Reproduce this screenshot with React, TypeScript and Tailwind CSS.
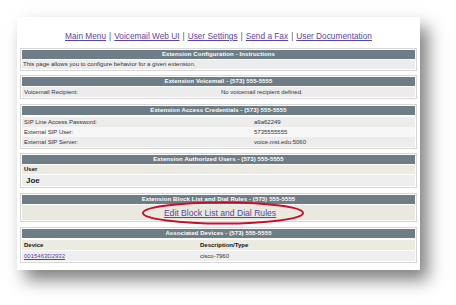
import React from "react";

const Header = ({ children }: { children: React.ReactNode }) => (
  <div className="h-[9px] bg-[#6e7d86] text-white text-[6px] leading-[9px] text-center font-bold tracking-[0.1px]">
    {children}
  </div>
);

const Box = ({ children, className = "" }: { children: React.ReactNode; className?: string }) => (
  <div className={"mx-[3px] border border-[#d6d6d6] p-px flex flex-col gap-px bg-white " + className}>
    {children}
  </div>
);

export default function App() {
  return (
    <div className="w-[456px] h-[305px] bg-white pl-[17px] pt-[17px]" style={{ fontFamily: '"Liberation Sans", Arial, sans-serif' }}>
      <div className="w-[403px] h-[253px] bg-white shadow-[8px_10px_16px_rgba(0,0,0,0.5)] flex flex-col">
        <div className="h-[31px] flex items-end justify-center pb-[6px] text-[8.3px] leading-[11px] text-[#555]">
          <span className="text-[#5b44a6] underline">Main Menu</span>
          <span className="mx-[3px]">|</span>
          <span className="text-[#5b44a6] underline">Voicemail Web UI</span>
          <span className="mx-[3px]">|</span>
          <span className="text-[#5b44a6] underline">User Settings</span>
          <span className="mx-[3px]">|</span>
          <span className="text-[#5b44a6] underline">Send a Fax</span>
          <span className="mx-[3px]">|</span>
          <span className="text-[#5b44a6] underline">User Documentation</span>
        </div>

        <div className="flex flex-col gap-[4px] text-[6px] text-[#333]">
          <Box>
            <Header>Extension Configuration - Instructions</Header>
            <div className="h-[9px] leading-[9px] bg-[#ececec] px-[1px]">
              This page allows you to configure behavior for a given extension.
            </div>
          </Box>

          <Box>
            <Header>Extension Voicemail - (573) 555-5555</Header>
            <div className="h-[10px] leading-[10px] bg-[#ececec] grid grid-cols-[197px_1fr] px-[2px]">
              <span>Voicemail Recipient:</span>
              <span>No voicemail recipient defined.</span>
            </div>
          </Box>

          <Box className="mt-[1px]">
            <Header>Extension Access Credentials - (573) 555-5555</Header>
            <div className="flex flex-col mt-[1px]">
              <div className="h-[10px] leading-[10px] bg-[#ececec] grid grid-cols-[230px_1fr] px-[2px]">
                <span>SIP Line Access Password:</span>
                <span>a9a62249</span>
              </div>
              <div className="h-[10px] leading-[10px] bg-[#f7f7f7] grid grid-cols-[230px_1fr] px-[2px]">
                <span>External SIP User:</span>
                <span>5735555555</span>
              </div>
              <div className="h-[10px] leading-[10px] bg-[#ececec] grid grid-cols-[230px_1fr] px-[2px]">
                <span>External SIP Server:</span>
                <span>voice.mst.edu:5060</span>
              </div>
            </div>
          </Box>

          <Box>
            <Header>Extension Authorized Users - (573) 555-5555</Header>
            <div className="h-[9px] leading-[9px] bg-[#ebebe1] px-[2px] font-bold text-[#111]">User</div>
            <div className="h-[11px] leading-[11px] bg-[#eeeeee] px-[4px] font-bold text-[8px] text-[#222]">Joe</div>
          </Box>

          <Box className="mt-[1px]">
            <Header>Extension Block List and Dial Rules - (573) 555-5555</Header>
            <div className="relative h-[15px] bg-[#e9e9df] flex items-center justify-center">
              <span className="text-[#5b44a6] underline text-[8.6px] leading-[10px] ml-[3px]">Edit Block List and Dial Rules</span>
              <svg className="absolute left-[119px] top-[-4px]" width="164" height="24" viewBox="0 0 164 24">
                <ellipse cx="82" cy="12" rx="80" ry="10.5" fill="none" stroke="#c8102e" strokeWidth="2" />
              </svg>
            </div>
          </Box>

          <Box className="mt-[1px]">
            <Header>Associated Devices - (573) 555-5555</Header>
            <div className="h-[10px] leading-[10px] bg-[#ebebe1] grid grid-cols-[176px_1fr] px-[2px] font-bold text-[#111] mt-[1px]">
              <span>Device</span>
              <span>Description/Type</span>
            </div>
            <div className="h-[10px] leading-[10px] bg-[#eeeeee] grid grid-cols-[176px_1fr] px-[2px]">
              <span className="text-[#5b44a6] underline">0015463D2932</span>
              <span>cisco-7960</span>
            </div>
          </Box>
        </div>
      </div>
    </div>
  );
}
